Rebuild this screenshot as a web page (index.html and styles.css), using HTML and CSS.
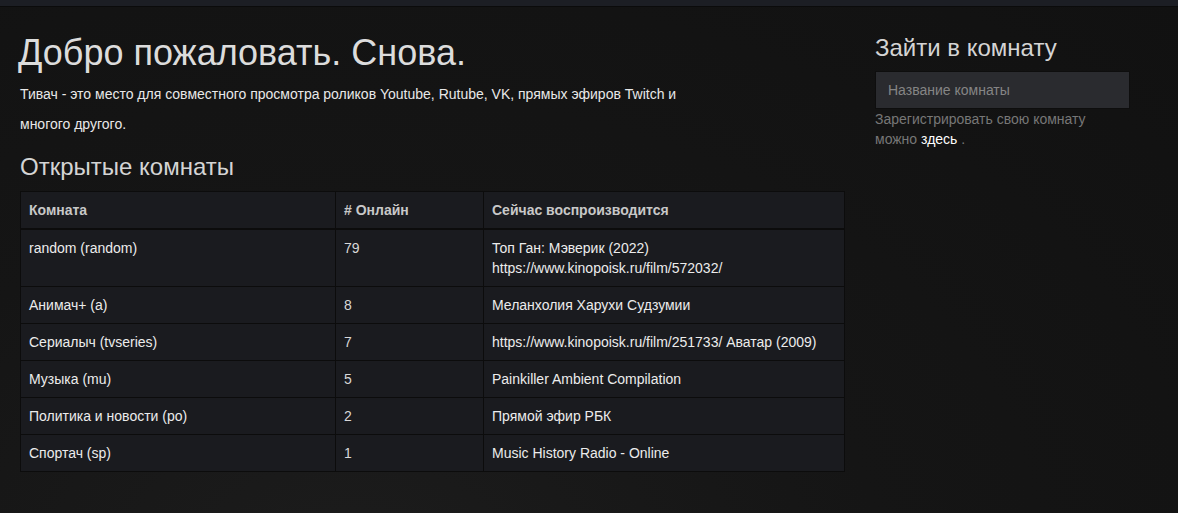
FILE: index.html
```html
<!DOCTYPE html>
<html lang="ru">
<head>
    <meta charset="UTF-8">
    <meta name="viewport" content="width=device-width, initial-scale=1.0">
    <title>Тивач</title>
    <link rel="stylesheet" href="styles.css">
</head>
<body>
    <div class="top-bar"></div>

    <div class="page">
        <!-- Main column -->
        <main class="main-column">
            <h1 class="welcome-title">Добро пожаловать. Снова.</h1>
            <p class="welcome-text">Тивач - это место для совместного просмотра роликов Youtube, Rutube, VK, прямых эфиров Twitch и многого другого.</p>

            <h3 class="rooms-title">Открытые комнаты</h3>
            <table class="rooms-table">
                <thead>
                    <tr>
                        <th class="col-room">Комната</th>
                        <th class="col-online"># Онлайн</th>
                        <th class="col-playing">Сейчас воспроизводится</th>
                    </tr>
                </thead>
                <tbody>
                    <tr>
                        <td>random (random)</td>
                        <td class="num">79</td>
                        <td>Топ Ган: Мэверик (2022)<br>https://www.kinopoisk.ru/film/572032/</td>
                    </tr>
                    <tr>
                        <td>Анимач+ (a)</td>
                        <td class="num">8</td>
                        <td>Меланхолия Харухи Судзумии</td>
                    </tr>
                    <tr>
                        <td>Сериалыч (tvseries)</td>
                        <td class="num">7</td>
                        <td>https://www.kinopoisk.ru/film/251733/ Аватар (2009)</td>
                    </tr>
                    <tr>
                        <td>Музыка (mu)</td>
                        <td class="num">5</td>
                        <td>Painkiller Ambient Compilation</td>
                    </tr>
                    <tr>
                        <td>Политика и новости (po)</td>
                        <td class="num">2</td>
                        <td>Прямой эфир РБК</td>
                    </tr>
                    <tr>
                        <td>Спортач (sp)</td>
                        <td class="num">1</td>
                        <td>Music History Radio - Online</td>
                    </tr>
                </tbody>
            </table>
        </main>

        <!-- Sidebar -->
        <aside class="side-column">
            <h3 class="join-title">Зайти в комнату</h3>
            <input class="room-input" type="text" placeholder="Название комнаты">
            <p class="register-text">Зарегистрировать свою комнату можно <a href="#" class="register-link">здесь</a>&nbsp;.</p>
        </aside>
    </div>
</body>
</html>
```

FILE: styles.css
```css
* {
    margin: 0;
    padding: 0;
    box-sizing: border-box;
}

body {
    font-family: 'Liberation Sans', Arial, sans-serif;
    font-size: 14px;
    line-height: 20px;
    color: #e6e6e6;
    background-color: #141414;
    background-image: radial-gradient(ellipse at 30% 110%, #1c1c1c 0%, #151515 45%, #111 100%);
    min-height: 100vh;
}

.top-bar {
    height: 7px;
    background-color: #1c1e24;
    border-bottom: 1px solid #0b0b0b;
}

.page {
    display: grid;
    grid-template-columns: 825px 255px;
    column-gap: 30px;
    padding: 0 20px;
}

/* Main column */
.welcome-title {
    font-size: 36px;
    font-weight: 400;
    line-height: 40px;
    color: #dcdcdc;
    margin-top: 26px;
    margin-left: -2px;
    margin-bottom: 6px;
}

.welcome-text {
    font-size: 14px;
    line-height: 30px;
    color: #e8e8e8;
    max-width: 670px;
}

.rooms-title {
    font-size: 24px;
    font-weight: 400;
    line-height: 26px;
    color: #d4d4d4;
    margin-top: 15px;
    margin-bottom: 11px;
}

.rooms-table {
    width: 825px;
    border-collapse: collapse;
    table-layout: fixed;
    background-color: #1a1b1f;
    border: 1px solid #0c0c0c;
}

.rooms-table th,
.rooms-table td {
    padding: 8px;
    text-align: left;
    vertical-align: top;
    border: 1px solid #0c0c0c;
}

.rooms-table th {
    font-weight: 700;
    color: #c8c8c8;
    border-bottom-width: 2px;
}

.rooms-table td {
    color: #ececec;
}

.rooms-table td.num {
    color: #d8d8d8;
}

.col-room {
    width: 315px;
}

.col-online {
    width: 148px;
}

/* Sidebar */
.side-column {
    padding-top: 28px;
}

.join-title {
    font-size: 24px;
    font-weight: 400;
    line-height: 26px;
    color: #d4d4d4;
    margin-bottom: 10px;
}

.room-input {
    display: block;
    width: 255px;
    height: 38px;
    padding: 0 12px;
    background-color: #2a2b2f;
    border: 1px solid #0e0e0e;
    color: #ddd;
    font-family: 'Liberation Sans', Arial, sans-serif;
    font-size: 14px;
    outline: none;
}

.room-input::placeholder {
    color: #858585;
}

.register-text {
    color: #777;
    font-size: 14px;
    line-height: 20px;
}

.register-link {
    color: #fff;
    text-decoration: none;
}
```
